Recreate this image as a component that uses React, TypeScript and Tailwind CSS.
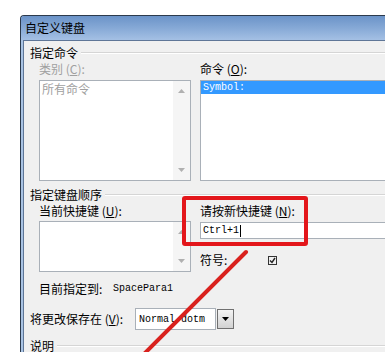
import React from "react";

const cjk = "font-['Noto_Sans_CJK_SC','Noto_Sans',sans-serif]";
const mono = "font-['Liberation_Mono',monospace]";

function Arrow({ up }: { up?: boolean }) {
  return (
    <svg width="7" height="4" viewBox="0 0 7 4" className="block">
      <path d={up ? "M0 4 L3.5 0 L7 4 Z" : "M0 0 L7 0 L3.5 4 Z"} fill="#b0b0b0" />
    </svg>
  );
}

function ScrollCol() {
  return (
    <div className="w-[17px] flex flex-col items-center justify-between py-[8px] bg-[#f5f5f5]">
      <Arrow up />
      <Arrow />
    </div>
  );
}

function Group({ title }: { title: string }) {
  return (
    <div className="flex items-center pl-[6px] h-[14px] leading-[14px]">
      <span>{title}</span>
      <div className="flex-1 ml-[3px] h-[2px] border-t border-[#d5d5d5] bg-white" />
    </div>
  );
}

export default function App() {
  return (
    <div className={`relative w-[385px] h-[352px] overflow-hidden bg-white text-[12px] text-black ${cjk}`}>
      {/* window */}
      <div className="ml-[20px] mt-[15px] w-[420px] h-[400px] flex flex-col border-l border-t border-[#2c3a4c] rounded-tl-[4px] bg-[#a9c3e3]">
        <div className="h-[24px] flex items-center pl-[4px] rounded-tl-[3px] bg-linear-to-b from-[#6b93c8] via-[#86a9d6] to-[#a4c0e4]">
          <span className="leading-[14px]">自定义键盘</span>
        </div>
        <div className="flex-1 ml-[2px] border-l border-t border-[#5f7697] bg-[#f0f0f0] pt-[5px]">
          <Group title="指定命令" />

          <div className="flex mt-[2px] pl-[15px] h-[14px] leading-[14px]">
            <div className="w-[161px] text-[#a0a0a0]">
              类别 (<u>C</u>):
            </div>
            <div>
              命令 (<u>O</u>):
            </div>
          </div>

          <div className="flex mt-[4px] pl-[15px]">
            <div className="w-[152px] h-[101px] flex border border-[#a9b0b8] bg-white">
              <div className="flex-1 pl-[2px] pt-[1px] leading-[14px] text-[#a0a0a0]">所有命令</div>
              <ScrollCol />
            </div>
            <div className="ml-[9px] flex-1 h-[101px] border border-[#a9b0b8] bg-white">
              <div className={`h-[13px] pl-[2px] leading-[13px] text-[10px] text-white bg-[#3399ff] ${mono}`}>
                Symbol:
              </div>
            </div>
          </div>

          <div className="mt-[7px]">
            <Group title="指定键盘顺序" />
          </div>

          <div className="flex mt-[2px] pl-[15px] h-[14px] leading-[14px]">
            <div className="w-[161px]">
              当前快捷键 (<u>U</u>):
            </div>
            <div>
              请按新快捷键 (<u>N</u>):
            </div>
          </div>

          <div className="flex mt-[3px] pl-[15px]">
            <div className="w-[152px] h-[51px] flex border border-[#a9b0b8] bg-white">
              <div className="flex-1" />
              <ScrollCol />
            </div>
            <div className="ml-[9px] flex-1">
              <div className="mt-[1px] h-[17px] flex items-center pl-[2px] border border-[#a9b0b8] bg-white">
                <span className={`text-[10px] leading-[13px] ${mono}`}>Ctrl+1</span>
                <span className="ml-[1px] w-px h-[12px] bg-black" />
              </div>
              <div className="mt-[14px] flex items-center h-[14px] leading-[14px]">
                <span className="w-[68px]">符号:</span>
                <span className="w-[9px] h-[9px] flex items-center justify-center border border-[#333]">
                  <svg width="7" height="7" viewBox="0 0 7 7">
                    <path d="M1 3.5 L3 5.5 L6 1" stroke="#222" strokeWidth="1.4" fill="none" />
                  </svg>
                </span>
              </div>
            </div>
          </div>

          <div className="flex items-center mt-[10px] pl-[15px] h-[14px] leading-[14px]">
            <span className="w-[74px]">目前指定到:</span>
            <span className={`text-[10px] ${mono}`}>SpacePara1</span>
          </div>

          <div className="flex items-center mt-[12px] pl-[6px] h-[22px]">
            <span className="w-[105px] leading-[14px]">
              将更改保存在 (<u>V</u>):
            </span>
            <div className="w-[81px] h-[22px] flex items-center pl-[3px] border border-[#a9b0b8] bg-white">
              <span className={`text-[10px] ${mono}`}>Normal.dotm</span>
            </div>
            <div className="ml-px w-[17px] h-[20px] flex items-center justify-center border border-[#707070] bg-linear-to-b from-[#f4f4f4] to-[#d2d2d2]">
              <svg width="7" height="4" viewBox="0 0 7 4">
                <path d="M0 0 L7 0 L3.5 4 Z" fill="#000" />
              </svg>
            </div>
          </div>

          <div className="mt-[9px]">
            <Group title="说明" />
          </div>
        </div>
      </div>

      {/* annotation overlays */}
      <div className="absolute left-[182px] top-[196px] w-[126px] h-[50px] border-[4px] border-[#e3161b] rounded-[3px]" />
      <svg className="absolute left-0 top-0" width="385" height="352" viewBox="0 0 385 352">
        <line x1="246" y1="252" x2="140" y2="358" stroke="#d9211d" strokeWidth="4" strokeLinecap="round" />
      </svg>
    </div>
  );
}
